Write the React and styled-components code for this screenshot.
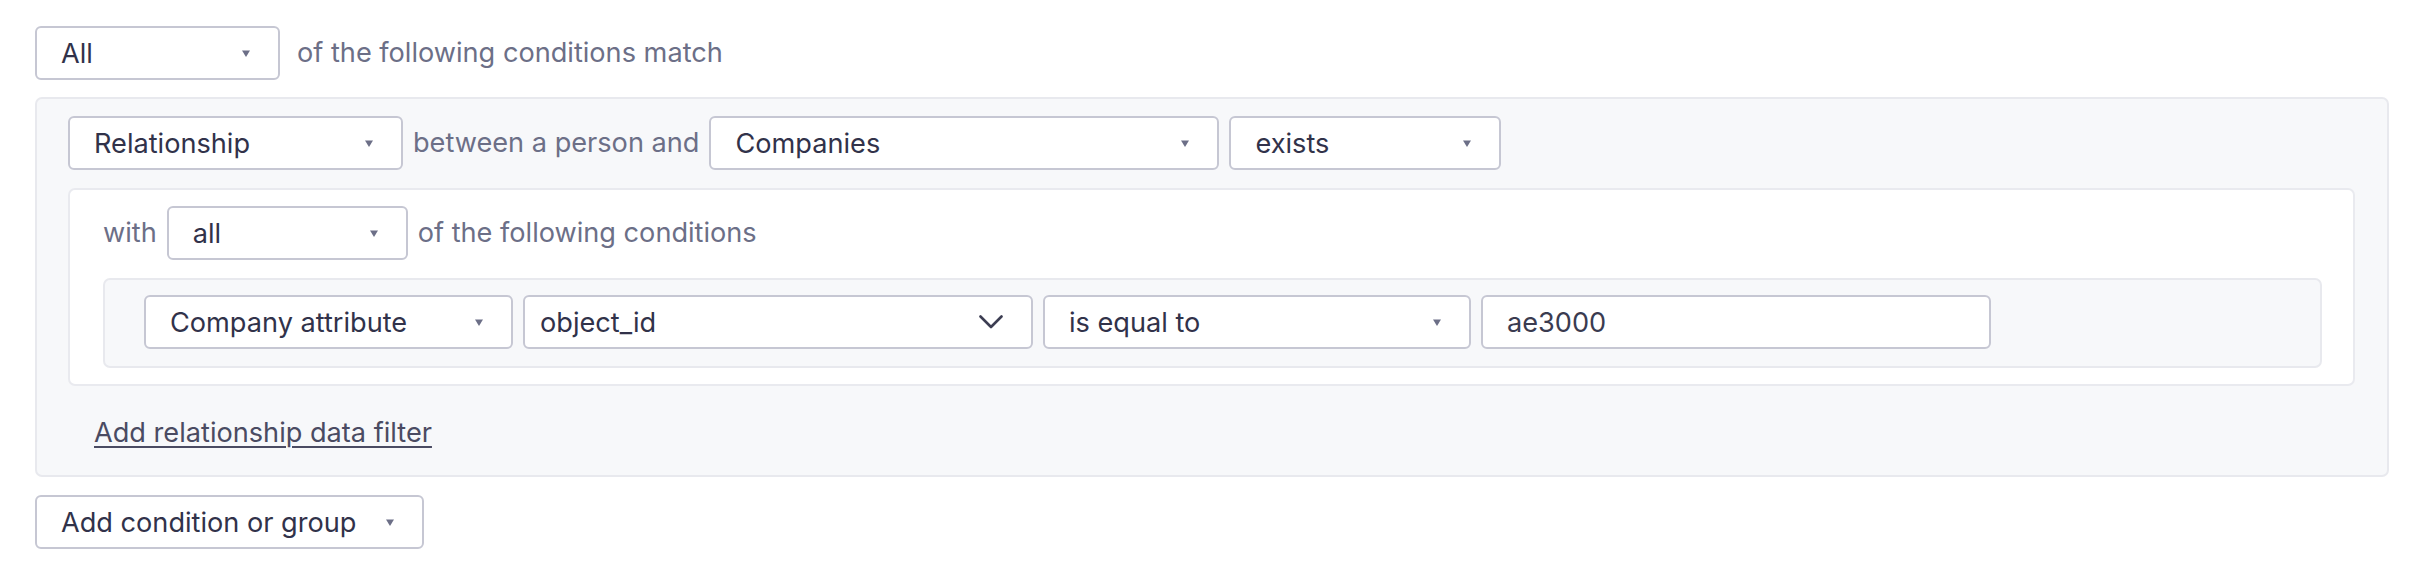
import React from "react";
import styled, { createGlobalStyle } from "styled-components";

const GlobalStyle = createGlobalStyle`
  html, body { margin: 0; padding: 0; background: #ffffff; }
  body { font-family: Inter, "Noto Sans", sans-serif; -webkit-font-smoothing: antialiased; }
  * { box-sizing: border-box; }
`;

const Page = styled.div`
  padding: 26px 40px 20px 35px;
  font-size: 27.15px;
  color: #31324a;
`;

const Row = styled.div`
  display: flex;
  align-items: center;
  gap: ${(p) => p.$gap || 10}px;
`;

const Label = styled.span`
  font-size: 27.15px;
  line-height: 40px;
  color: #6c6f87;
  white-space: nowrap;
`;

const SelectBox = styled.div`
  display: flex;
  align-items: center;
  justify-content: space-between;
  width: ${(p) => p.$w}px;
  height: 54px;
  flex: none;
  padding: 0 28px 0 ${(p) => (p.$compact ? 15 : 24)}px;
  background: #ffffff;
  border: 2px solid #c6c7d3;
  border-radius: 6px;
  font-size: 27.15px;
  color: #31324a;
  white-space: nowrap;
`;

const TextInput = styled.div`
  display: flex;
  align-items: center;
  width: ${(p) => p.$w}px;
  height: 54px;
  flex: none;
  padding: 0 24px;
  background: #ffffff;
  border: 2px solid #c6c7d3;
  border-radius: 6px;
  font-size: 27.15px;
  color: #3a3b50;
`;

const Panel = styled.div`
  margin-top: 17px;
  background: #f7f8fa;
  border: 2px solid #e8e9ee;
  border-radius: 7px;
  padding: 17px 32px 0 31px;
`;

const SubPanel = styled.div`
  margin-top: 18px;
  background: #ffffff;
  border: 2px solid #e9eaef;
  border-radius: 7px;
  padding: 16px 31px 16px 33px;
`;

const ConditionRow = styled.div`
  margin-top: 18px;
  display: flex;
  align-items: center;
  gap: 10px;
  background: #f7f8fa;
  border: 2px solid #e8e9ee;
  border-radius: 7px;
  padding: 15px 20px 17px 39px;
`;

const LinkRow = styled.div`
  padding: 27px 0 22px 26px;
`;

const Link = styled.a`
  font-size: 27.15px;
  line-height: 40px;
  color: #4a4b62;
  text-decoration: underline;
  text-decoration-thickness: 2px;
  text-underline-offset: 4px;
  cursor: pointer;
`;

const AddButton = styled(SelectBox)`
  margin-top: 18px;
`;

const Caret = () => (
  <svg width="8" height="7" viewBox="0 0 8 7" style={{ flex: "none" }}>
    <polygon points="0,0.5 8,0.5 4,7" fill="#6c6f87" />
  </svg>
);

const Chevron = () => (
  <svg width="24" height="14" viewBox="0 0 24 14" style={{ flex: "none" }}>
    <polyline
      points="1.5,1.5 12,12 22.5,1.5"
      fill="none"
      stroke="#3c3d52"
      strokeWidth="2.6"
      strokeLinecap="round"
      strokeLinejoin="round"
    />
  </svg>
);

const Select = ({ w, children, chevron }) => (
  <SelectBox $w={w} $compact={chevron}>
    <span>{children}</span>
    {chevron ? <Chevron /> : <Caret />}
  </SelectBox>
);

export default function App() {
  return (
    <>
      <GlobalStyle />
      <Page>
        <Row $gap={17}>
          <Select w={245}>All</Select>
          <Label>of the following conditions match</Label>
        </Row>

        <Panel>
          <Row>
            <Select w={335}>Relationship</Select>
            <Label>between a person and</Label>
            <Select w={510}>Companies</Select>
            <Select w={272}>exists</Select>
          </Row>

          <SubPanel>
            <Row>
              <Label>with</Label>
              <Select w={241}>all</Select>
              <Label>of the following conditions</Label>
            </Row>
            <ConditionRow>
              <Select w={369}>Company attribute</Select>
              <Select w={510} chevron>
                object_id
              </Select>
              <Select w={428}>is equal to</Select>
              <TextInput $w={510}>ae3000</TextInput>
            </ConditionRow>
          </SubPanel>

          <LinkRow>
            <Link>Add relationship data filter</Link>
          </LinkRow>
        </Panel>

        <AddButton as="div" $w={389}>
          <span>Add condition or group</span>
          <Caret />
        </AddButton>
      </Page>
    </>
  );
}
